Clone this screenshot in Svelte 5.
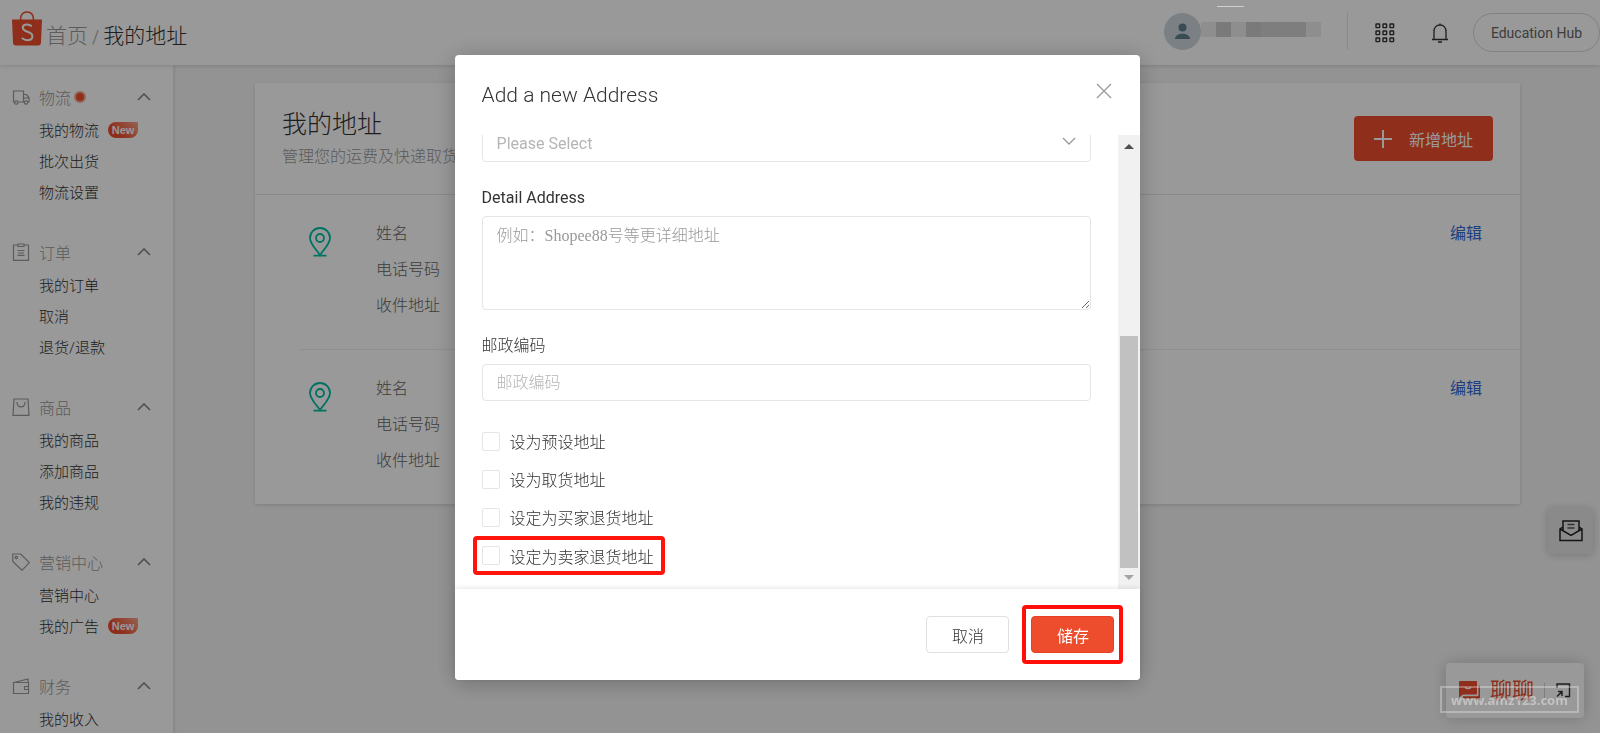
<script lang="ts">
    type MenuItem = { label: string; isNew?: boolean };
    type MenuGroup = { icon: string; title: string; dot?: boolean; items: MenuItem[] };

    const menu: MenuGroup[] = [
        { icon: "truck", title: "物流", dot: true, items: [{ label: "我的物流", isNew: true }, { label: "批次出货" }, { label: "物流设置" }] },
        { icon: "order", title: "订单", items: [{ label: "我的订单" }, { label: "取消" }, { label: "退货/退款" }] },
        { icon: "bag", title: "商品", items: [{ label: "我的商品" }, { label: "添加商品" }, { label: "我的违规" }] },
        { icon: "tag", title: "营销中心", items: [{ label: "营销中心" }, { label: "我的广告", isNew: true }] },
        { icon: "wallet", title: "财务", items: [{ label: "我的收入" }] },
    ];

    const addresses = [1, 2];
    const addressFields = ["姓名", "电话号码", "收件地址"];

    let options = $state([
        { id: "default", label: "设为预设地址", checked: false, marked: false },
        { id: "pickup", label: "设为取货地址", checked: false, marked: false },
        { id: "buyer-return", label: "设定为买家退货地址", checked: false, marked: false },
        { id: "seller-return", label: "设定为卖家退货地址", checked: false, marked: true },
    ]);

    let detail = $state("");
    let postcode = $state("");
</script>

<div class="page">
    <header class="topbar">
        <a class="logo" href="#home" aria-label="Shopee">
            <svg width="30" height="35" viewBox="0 0 30 35">
                <path d="M8.500 9C8.500 4 11 1 15 1s6.500 3 6.500 8" fill="none" stroke="#ee4d2d" stroke-width="1.600" />
                <path d="M0 8.500h30l-1 23a3 3 0 0 1-3 3H4a3 3 0 0 1-3-3z" fill="#ee4d2d" />
                <path d="M19.800 15.200c-3-2.600-9-2.600-9 1.600 0 4.800 9.600 3.200 9.600 8.400 0 4.800-6.800 5-10.600 1.800" fill="none" stroke="#fff" stroke-width="2" />
            </svg>
        </a>
        <nav class="breadcrumb">
            <a href="#home">首页</a><span class="slash">/</span><span class="current">我的地址</span>
        </nav>
        <div class="account">
            <svg class="avatar" width="37" height="37" viewBox="0 0 37 37">
                <circle cx="18.500" cy="18.500" r="18.500" fill="#cbd6da" />
                <circle cx="18.500" cy="14.500" r="4" fill="#607d8b" />
                <path d="M11 26c0-3.500 4-5.200 7.500-5.200S26 22.500 26 26z" fill="#607d8b" />
            </svg>
            <div class="masked">
                <i></i><i></i><i></i><i></i><i></i><i></i><i></i><i></i>
            </div>
        </div>
        <div class="tools">
            <button class="icon-button" aria-label="Apps">
                <svg width="20" height="20" viewBox="0 0 20 20" fill="none" stroke="#333" stroke-width="1.400">
                    {#each [1, 8, 15] as y}
                        {#each [1, 8, 15] as x}
                            <rect {x} {y} width="3.600" height="3.600" rx="0.400" />
                        {/each}
                    {/each}
                </svg>
            </button>
            <button class="icon-button" aria-label="Notifications">
                <svg width="18" height="20" viewBox="0 0 18 20" fill="none" stroke="#333" stroke-width="1.300">
                    <path d="M1 16.500h16M3 16.500V8.500C3 4.500 5.500 2 9 2s6 2.500 6 6.500v8M9 2V.500M7 19h4" />
                </svg>
            </button>
            <button class="hub">Education Hub</button>
        </div>
    </header>

    <div class="layout">
        <aside class="sidebar">
            {#each menu as group}
                <section class="group">
                    <button class="group-title">
                        <svg class="group-icon" width="18" height="18" viewBox="0 0 18 18" fill="none" stroke="#999" stroke-width="1.200">
                            {#if group.icon === "truck"}
                                <path d="M2.500 14H1.500V3h10v11H6M11.500 6.500h3l2.500 3V14h-1M12 14h-.500M12 10h5" />
                                <circle cx="4.300" cy="14.500" r="1.700" />
                                <circle cx="14" cy="14.500" r="1.700" />
                            {:else if group.icon === "order"}
                                <path d="M6 2H1.500v15.400h15V2H12M6 1h6v2.500H6zM5.500 7.500h7M6 10h6M5.500 12.300h7" />
                            {:else if group.icon === "bag"}
                                <path d="M2 1h14l1 16.400H1zM5 4c0 6.500 8 6.500 8 0" />
                            {:else if group.icon === "tag"}
                                <path d="M.800 1h8l8.500 8.700-7.300 7.600L.800 8.500z" />
                                <circle cx="4.300" cy="4.500" r="1.200" />
                            {:else}
                                <path d="M16 5.500V2L2 5.500M1.500 5.500h15v11h-15zM16.500 9.500h-4v3h4" />
                            {/if}
                        </svg>
                        <span>{group.title}</span>
                        {#if group.dot}<span class="dot"></span>{/if}
                        <svg class="chevron" width="14" height="8" viewBox="0 0 14 8" fill="none" stroke="#888" stroke-width="1.700">
                            <path d="M1 7l6-6 6 6" />
                        </svg>
                    </button>
                    {#each group.items as item}
                        <a class="item" href="#menu">{item.label}{#if item.isNew}<span class="new">New</span>{/if}</a>
                    {/each}
                </section>
            {/each}
        </aside>

        <main class="content">
            <div class="card">
                <div class="card-head">
                    <div>
                        <h1>我的地址</h1>
                        <p>管理您的运费及快递取货地址</p>
                    </div>
                    <button class="add">
                        <svg width="18" height="18" viewBox="0 0 18 18" stroke="#fff" stroke-width="2">
                            <path d="M9 0v18M0 9h18" />
                        </svg>
                        新增地址
                    </button>
                </div>
                {#each addresses as address (address)}
                    <div class="address">
                        <svg class="pin" width="22" height="30" viewBox="0 0 22 30" fill="none" stroke="#00bfa5" stroke-width="1.800">
                            <path d="M11 28C8 23.500 1 17 1 11a10 10 0 0 1 20 0c0 6-7 12.500-10 17zM4.500 28.600h13" />
                            <circle cx="11" cy="11" r="4" />
                        </svg>
                        <div class="fields">
                            {#each addressFields as field}
                                <div>{field}</div>
                            {/each}
                        </div>
                        <a class="edit" href="#edit">编辑</a>
                    </div>
                {/each}
            </div>
        </main>
    </div>

    <button class="feedback" aria-label="Feedback">
        <svg width="24" height="22" viewBox="0 0 24 22" fill="none" stroke="#222" stroke-width="1.500">
            <path d="M4 7L1 9v11.500h22V9l-3-2M1 9l11 6.500L23 9M4 11V1h16v10" />
            <path d="M8.500 4.500h7M8.500 8h7" stroke="#555" />
        </svg>
    </button>

    <div class="chat">
        <svg width="22" height="20" viewBox="0 0 22 20">
            <path d="M1 0h16a1 1 0 0 1 1 1v11.500a1 1 0 0 1-1 1H4L0 16.500V1a1 1 0 0 1 1-1z" fill="#ee4d2d" />
            <path d="M19.500 4.500h.500a1 1 0 0 1 1 1V20l-3-2.500H5a1 1 0 0 1-1-1v-1.300h14.500a1 1 0 0 0 1-1z" fill="#ee4d2d" />
            <path d="M6 6.500c1.500 1.400 4.500 1.400 6 0" fill="none" stroke="#fff" stroke-width="1.200" />
        </svg>
        <button class="chat-name">聊聊</button>
        <button class="popout" aria-label="Expand">
            <svg width="15" height="15" viewBox="0 0 15 15" fill="none" stroke="#333" stroke-width="1.400">
                <path d="M1 5V1h12.500v12.500H9M1 13.500L5.500 9M2 8.500h4V13" />
            </svg>
        </button>
    </div>
</div>

<div class="overlay">
    <div class="modal" role="dialog" aria-modal="true" aria-labelledby="modal-title">
        <div class="modal-head">
            <h2 id="modal-title">Add a new Address</h2>
            <button class="close" aria-label="Close">
                <svg width="16" height="16" viewBox="0 0 16 16" stroke="#999" stroke-width="1.300">
                    <path d="M1 1l14 14M15 1L1 15" />
                </svg>
            </button>
        </div>
        <div class="modal-body">
            <form class="form" id="address-form">
                <div class="select">
                    <select aria-label="Area">
                        <option>Please Select</option>
                    </select>
                    <svg width="14" height="8" viewBox="0 0 14 8" fill="none" stroke="#999" stroke-width="1.300">
                        <path d="M1 1l6 6 6-6" />
                    </svg>
                </div>
                <label class="label" for="detail">Detail Address</label>
                <textarea id="detail" placeholder="例如：Shopee88号等更详细地址" bind:value={detail}></textarea>
                <label class="label light" for="postcode">邮政编码</label>
                <input id="postcode" class="text" type="text" placeholder="邮政编码" bind:value={postcode} />
                <div class="options">
                    {#each options as option (option.id)}
                        <label class="option" class:marked={option.marked}>
                            <input type="checkbox" bind:checked={option.checked} />
                            {option.label}
                        </label>
                    {/each}
                </div>
            </form>
            <div class="scrollbar">
                <svg width="10" height="6" viewBox="0 0 10 6"><path d="M0 6l5-5 5 5z" fill="#505050" /></svg>
                <div class="thumb"></div>
                <svg width="10" height="6" viewBox="0 0 10 6"><path d="M0 0l5 5 5-5z" fill="#a3a3a3" /></svg>
            </div>
        </div>
        <div class="modal-foot">
            <button class="cancel">取消</button>
            <div class="save-frame">
                <button class="save" type="submit" form="address-form">储存</button>
            </div>
        </div>
    </div>
</div>

<div class="watermark">www.amz123.com</div>
<div class="streak"></div>

<style>
    :global(body) {
        font-family: Roboto, "Noto Sans CJK SC", sans-serif;
        font-size: 16px;
        font-weight: 300;
        color: #333;
    }

    button {
        font: inherit;
        color: inherit;
        padding: 0;
        border: 0;
        background: none;
        cursor: pointer;
    }

    a {
        color: inherit;
        text-decoration: none;
    }

    .page {
        display: flex;
        flex-direction: column;
        height: 100vh;
        overflow: hidden;
        background: #f6f6f6;
    }

    .topbar {
        position: relative;
        z-index: 1;
        display: flex;
        align-items: center;
        flex: none;
        height: 65px;
        padding-left: 12px;
        background: #fff;
        box-shadow: 0 1px 4px rgba(0, 0, 0, 0.15);
    }

    .logo {
        height: 35px;
        margin-bottom: 8px;
    }

    .breadcrumb {
        display: flex;
        align-items: baseline;
        margin: 2px 0 0 4px;
        font-size: 21px;
        color: #999;
    }

    .slash {
        margin: 0 4px;
        font-size: 18px;
    }

    .current {
        color: #333;
    }

    .account {
        display: flex;
        align-items: center;
        height: 37px;
        margin: 0 0 2px auto;
        padding-right: 26px;
        border-right: 1px solid #e5e5e5;
    }

    .masked {
        display: flex;
        height: 15px;
        margin-bottom: 4px;
    }

    .masked i {
        width: 15px;
        background: #d3d3d3;
    }

    .masked i:first-child,
    .masked i:nth-child(3),
    .masked i:last-child {
        background: #ededed;
    }

    .masked i:nth-child(2),
    .masked i:nth-child(4) {
        background: #cccccc;
    }

    .tools {
        display: flex;
        align-items: center;
        gap: 36px;
        padding-left: 27px;
    }

    .icon-button {
        display: flex;
    }

    .hub {
        height: 39px;
        margin-left: -12px;
        padding: 0 17px;
        border: 1px solid #d8d8d8;
        border-radius: 20px;
        font-size: 14px;
        font-weight: 400;
        color: #666;
    }

    .layout {
        display: flex;
        flex: 1;
        min-height: 0;
    }

    .sidebar {
        flex: none;
        box-sizing: border-box;
        width: 173px;
        padding: 15px 22px 0 12px;
        background: #fff;
        box-shadow: 1px 0 4px rgba(0, 0, 0, 0.12);
        overflow: hidden;
    }

    .group {
        margin-bottom: 28px;
    }

    .group-title {
        display: flex;
        align-items: center;
        width: 100%;
        height: 34px;
        color: #999;
    }

    .group-icon {
        margin-right: 9px;
    }

    .dot {
        width: 8px;
        height: 8px;
        margin-left: 3px;
        border: 2px solid #f9a795;
        border-radius: 50%;
        background: #ee4d2d;
    }

    .chevron {
        margin-left: auto;
    }

    .item {
        display: flex;
        align-items: center;
        height: 31px;
        padding-left: 27px;
        font-size: 15px;
        white-space: nowrap;
    }

    .new {
        width: 30px;
        margin-left: 9px;
        border-radius: 8px 1px 8px 8px;
        background: linear-gradient(45deg, #ee4d2d 30%, #fba58c);
        font-family: "Liberation Sans", sans-serif;
        font-size: 11px;
        font-weight: 700;
        line-height: 16px;
        text-align: center;
        color: #fff;
    }

    .content {
        flex: 1;
        padding: 18px 80px 0 82px;
    }

    .card {
        background: #fff;
        box-shadow: 0 1px 4px rgba(0, 0, 0, 0.15);
    }

    .card-head {
        display: flex;
        align-items: center;
        justify-content: space-between;
        height: 111px;
        padding: 0 27px;
        border-bottom: 1px solid #e5e5e5;
    }

    h1 {
        margin: 0;
        font-size: 25px;
        font-weight: 300;
        line-height: 36px;
    }

    p {
        margin: 0;
        line-height: 28px;
        color: #999;
    }

    .add {
        display: flex;
        align-items: center;
        gap: 17px;
        height: 45px;
        padding: 0 20px;
        border-radius: 4px;
        background: #ee4d2d;
        font-weight: 400;
        color: #fff;
    }

    .address {
        display: flex;
        margin-left: 45px;
        padding: 21px 38px 25px 9px;
        line-height: 36px;
        color: #666;
    }

    .address + .address {
        border-top: 1px solid #efefef;
    }

    .pin {
        margin: 11px 45px 0 0;
    }

    .edit {
        margin-left: auto;
        color: #2f6ad9;
        font-weight: 400;
    }

    .feedback {
        position: fixed;
        right: 7px;
        top: 508px;
        display: flex;
        align-items: center;
        justify-content: center;
        width: 45px;
        height: 46px;
        border-radius: 4px;
        background: #e6e6e6;
        box-shadow: 0 1px 8px rgba(0, 0, 0, 0.2);
    }

    .chat {
        position: fixed;
        right: 16px;
        bottom: 15px;
        display: flex;
        align-items: center;
        height: 55px;
        padding: 0 13px;
        border-radius: 4px;
        background: #fff;
        box-shadow: 0 0 16px rgba(0, 0, 0, 0.2);
    }

    .chat-name {
        margin: 0 10px 0 9px;
        font-size: 22px;
        line-height: 30px;
        font-weight: 400;
        color: #ee4d2d;
    }

    .popout {
        display: flex;
        padding-left: 11px;
        border-left: 1px solid #d0d0d0;
    }

    .overlay {
        position: fixed;
        inset: 0;
        z-index: 2;
        display: flex;
        align-items: center;
        justify-content: center;
        padding: 2px 5px 0 0;
        background: rgba(0, 0, 0, 0.4);
    }

    .modal {
        display: flex;
        flex-direction: column;
        width: 43%;
        border-radius: 4px;
        background: #fff;
        box-shadow: 0 3px 24px rgba(0, 0, 0, 0.25);
    }

    .modal-head {
        display: flex;
        align-items: center;
        justify-content: space-between;
        height: 72px;
        padding: 0 28px 8px 27px;
    }

    h2 {
        margin: 8px 0 0;
        font-size: 21px;
        font-weight: 300;
    }

    .close {
        display: flex;
    }

    /* the form is scrolled to its end, so it hangs from the bottom edge */
    .modal-body {
        display: flex;
        align-items: flex-end;
        height: 454px;
        overflow: hidden;
    }

    .form {
        display: flex;
        flex-direction: column;
        flex: 1;
        padding: 0 27px 14px;
    }

    .select {
        position: relative;
    }

    .select svg {
        position: absolute;
        right: 15px;
        top: 12px;
        pointer-events: none;
    }

    select,
    textarea,
    .text {
        display: block;
        box-sizing: border-box;
        width: 100%;
        height: 37px;
        margin: 0;
        padding: 0 14px;
        border: 1px solid #e5e5e5;
        border-radius: 4px;
        outline: 0;
        background: #fff;
        font: inherit;
        color: #333;
    }

    select {
        appearance: none;
        font-weight: 400;
        color: #b5b5b5;
    }

    textarea {
        height: 94px;
        padding: 7px 14px;
        font-family: "Liberation Serif", "Noto Sans CJK SC", serif;
        line-height: 24px;
        resize: vertical;
    }

    textarea::placeholder {
        color: #999;
    }

    .text::placeholder {
        color: #b5b5b5;
    }

    .label {
        margin: 24px 0 6px;
        line-height: 24px;
        font-weight: 400;
    }

    .label.light {
        font-weight: 300;
    }

    .options {
        display: flex;
        flex-direction: column;
        align-items: flex-start;
        margin-top: 21px;
    }

    .option {
        display: flex;
        align-items: center;
        height: 38px;
    }

    .option.marked {
        height: 31px;
        margin-left: -9px;
        padding: 0 7px 0 5px;
        border: 4px solid #ff150c;
        border-radius: 4px;
    }

    .option input {
        appearance: none;
        box-sizing: border-box;
        width: 18px;
        height: 19px;
        margin: 0 10px 0 0;
        border: 1px solid #e5e5e5;
        border-radius: 2px;
    }

    .scrollbar {
        display: flex;
        flex-direction: column;
        align-items: center;
        box-sizing: border-box;
        width: 22px;
        height: 100%;
        padding: 8px 0;
        background: #f1f1f1;
    }

    .thumb {
        width: 18px;
        height: 232px;
        margin: auto 0 7px;
        background: #c1c1c1;
    }

    .modal-foot {
        position: relative;
        display: flex;
        align-items: center;
        justify-content: flex-end;
        gap: 13px;
        height: 91px;
        padding-right: 17px;
        border-radius: 0 0 4px 4px;
        background: #fff;
        box-shadow: 0 -1px 5px rgba(0, 0, 0, 0.1);
    }

    .cancel,
    .save {
        box-sizing: border-box;
        width: 83px;
        height: 37px;
        border: 1px solid #e0e0e0;
        border-radius: 4px;
    }

    .save {
        border-color: #e8401f;
        background: #ee4d2d;
        font-weight: 400;
        color: #fff;
    }

    .save-frame {
        display: flex;
        padding: 7px 5px;
        border: 4px solid #ff0f08;
        border-radius: 4px;
    }

    .watermark {
        position: fixed;
        z-index: 3;
        right: 21px;
        bottom: 20px;
        box-sizing: border-box;
        width: 139px;
        height: 27px;
        border: 2px solid rgba(255, 255, 255, 0.3);
        font-family: "Noto Sans", sans-serif;
        font-size: 13px;
        font-weight: 700;
        line-height: 24px;
        text-align: center;
        color: rgba(255, 255, 255, 0.4);
    }

    .streak {
        position: fixed;
        z-index: 3;
        top: 6px;
        right: 356px;
        width: 27px;
        height: 1px;
        background: #d0d0d0;
    }
</style>
